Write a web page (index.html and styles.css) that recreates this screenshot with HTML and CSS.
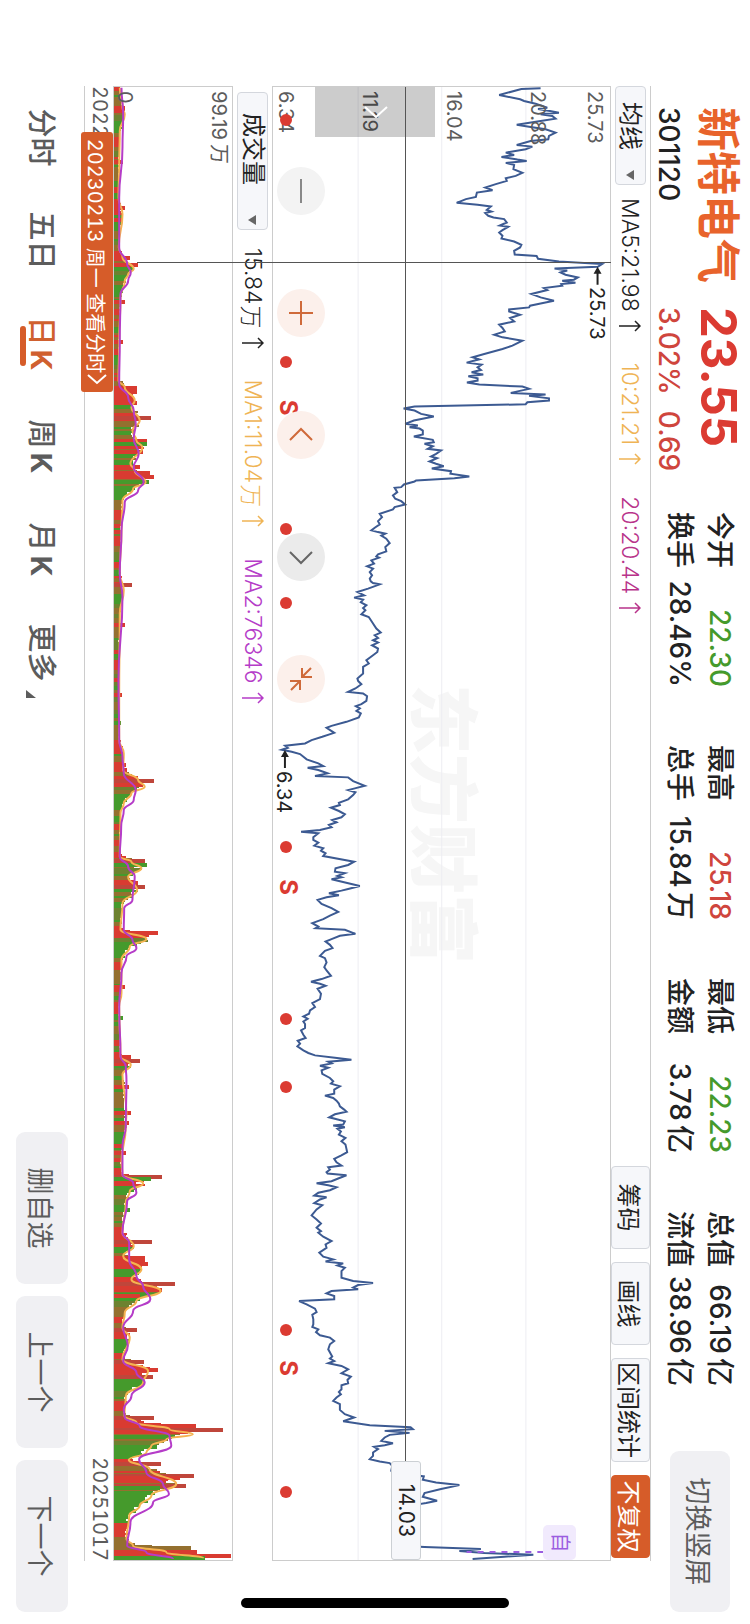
FILE: index.html
```html
<!DOCTYPE html>
<html lang="zh-CN">
<head>
  <meta charset="UTF-8" />
  <meta name="viewport" content="width=device-width, initial-scale=1.0"/>
  <title>新特电气 301120</title>
  <link rel="stylesheet" href="styles.css">
</head>
<body>
  <svg width="0" height="0" class="defs">
    <symbol id="up" viewBox="0 0 12 22"><path stroke-width="1.5" d="M6 22V1M1 6l5-5 5 5"/></symbol>
  </svg>
  <div class="screen">
    <header class="header">
      <div class="quote">
        <h1 class="name">新特电气</h1>
        <strong class="price">23.55</strong>
        <span class="code">301120</span>
        <span class="change"><span>3.02%</span><span>0.69</span></span>
      </div>
      <dl class="stats">
        <div><dt>今开</dt><dd class="down">22.30</dd></div>
        <div><dt>最高</dt><dd class="up">25.18</dd></div>
        <div><dt>最低</dt><dd class="down">22.23</dd></div>
        <div><dt>总值</dt><dd>66.19<span class="unit">亿</span></dd></div>
        <div><dt>换手</dt><dd>28.46%</dd></div>
        <div><dt>总手</dt><dd>15.84<span class="unit">万</span></dd></div>
        <div><dt>金额</dt><dd>3.78<span class="unit">亿</span></dd></div>
        <div><dt>流值</dt><dd>38.96<span class="unit">亿</span></dd></div>
      </dl>
      <button class="btn btn-rotate">切换竖屏</button>
    </header>

    <main class="main">
      <div class="bar">
        <span class="picker">
          <select aria-label="主图指标"><option>均线</option></select>
        </span>
        <span class="ma">MA5:21.98<svg class="arrow"><use href="#up"/></svg></span>
        <span class="ma ma-gold">10:21.21<svg class="arrow"><use href="#up"/></svg></span>
        <span class="ma ma-pink">20:20.44<svg class="arrow"><use href="#up"/></svg></span>
        <div class="tools">
          <button class="tool">筹码</button>
          <button class="tool">画线</button>
          <button class="tool">区间统计</button>
          <button class="tool tool-active">不复权</button>
        </div>
      </div>

      <div class="charts">
        <section class="price-chart">
          <div class="watermark">东方财富</div>
          <svg class="plot" viewBox="0 0 1475 338" preserveAspectRatio="none">
            <path class="grid" d="M0 84.5H1475M0 169H1475M0 253H1475"/>
            <polyline class="price-line" id="priceLine"/>
            <path class="self-line" d="M1467 67V144"/>
            <path class="hint" d="M183 12.500H198M667 326.500H682"/>
            <path class="hint-head" d="M180 12.500l7-4v8zM664 326.500l7-4v8z"/>
          </svg>
          <ul class="scale">
            <li>25.73</li>
            <li>20.88</li>
            <li>16.04</li>
            <li>11.19</li>
            <li>6.34</li>
          </ul>
          <span class="note note-high">25.73</span>
          <span class="note note-low">6.34</span>
          <div id="events"></div>
          <button class="handle" aria-label="展开">
            <svg width="12" height="24" viewBox="0 0 12 24"><path d="M1 1l10 11L1 23"/></svg>
          </button>
          <div class="round-btns">
            <button class="round round-off" aria-label="缩小">
              <svg viewBox="0 0 24 24"><path d="M0 12h24"/></svg>
            </button>
            <button class="round" aria-label="放大">
              <svg viewBox="0 0 24 24"><path d="M12 0v24M0 12h24"/></svg>
            </button>
            <button class="round" aria-label="左移">
              <svg viewBox="0 0 24 24"><path d="M17 1L6 12l11 11"/></svg>
            </button>
            <button class="round round-gray" aria-label="右移">
              <svg viewBox="0 0 24 24"><path d="M7 1l11 11L7 23"/></svg>
            </button>
            <button class="round" aria-label="收起">
              <svg viewBox="0 0 24 24"><path d="M1 11h9V1M10 11L1 2M14 23V13h9M14 13l9 9"/></svg>
            </button>
          </div>
          <span class="cross-x"></span>
          <span class="cross-label">14.03</span>
          <span class="self-tag">自</span>
        </section>

        <div class="bar bar-volume">
          <span class="picker picker-wide">
            <select aria-label="副图指标"><option>成交量</option></select>
          </span>
          <span class="ma">15.84<span class="unit">万</span><svg class="arrow"><use href="#up"/></svg></span>
          <span class="ma ma-gold">MA1:11.04<span class="unit">万</span><svg class="arrow"><use href="#up"/></svg></span>
          <span class="ma ma-purple">MA2:76346<svg class="arrow"><use href="#up"/></svg></span>
        </div>

        <section class="volume-chart">
          <svg class="plot" viewBox="0 0 1475 119" preserveAspectRatio="none">
            <g id="bars" shape-rendering="crispEdges"></g>
            <path class="vol-ma1" id="volMa1"/>
            <path class="vol-ma2" id="volMa2"/>
          </svg>
          <span class="vol-max">99.19<span class="unit">万</span></span>
          <span class="vol-min">0</span>
        </section>
        <span class="cross-y"></span>
      </div>

      <div class="dates">
        <span>20220805</span>
        <span>20251017</span>
        <button class="date-tip">20230213 周一 查看分时<svg width="12" height="20" viewBox="0 0 12 20"><path d="M2 1l8 9-8 9"/></svg></button>
      </div>
    </main>

    <footer class="footer">
      <nav class="tabs">
        <a href="#">分时</a>
        <a href="#">五日</a>
        <a href="#" class="active">日<b class="unit">K</b></a>
        <a href="#">周<b class="unit">K</b></a>
        <a href="#">月<b class="unit">K</b></a>
        <a href="#" class="more">更多</a>
      </nav>
      <button class="btn">删自选</button>
      <button class="btn">上一个</button>
      <button class="btn">下一个</button>
    </footer>
    <div class="home-bar"></div>
  </div>

  <script src="chart.js"></script>
</body>
</html>
```
FILE: styles.css
```css
* { box-sizing: border-box; }
html, body { height: 100%; margin: 0; overflow: hidden; }
body {
  background: #fff;
  color: #222;
  font-family: Inter, "Noto Sans CJK SC", sans-serif;
}
button, select { font-family: inherit; margin: 0; }
button { padding: 0; border: none; cursor: pointer; }
h1, ul, dl, dd { margin: 0; padding: 0; }
.defs { position: absolute; }
.unit { margin-left: 4px; }

/* landscape page on a portrait device */
.screen {
  position: relative;
  display: flex;
  flex-direction: column;
  width: 100vh;
  height: 100vw;
  transform-origin: 0 0;
  transform: translateX(100vw) rotate(90deg);
}

.header {
  display: flex;
  align-items: flex-start;
  height: 99px;
  padding: 0 12px 0 107px;
}
.quote {
  display: grid;
  grid-template-columns: 200px 205px;
  grid-template-rows: 64px 34px;
  align-items: center;
}
.name { font-size: 44px; line-height: 64px; font-weight: 700; color: #e8632b; }
.price { font-size: 49px; line-height: 62px; font-weight: 700; color: #db3b32; }
.code { font-size: 28px; line-height: 34px; font-weight: 500; }
.change {
  display: flex;
  gap: 16px;
  font-size: 28px;
  line-height: 34px;
  font-weight: 500;
  color: #cf453d;
}
.stats {
  display: grid;
  grid-template-columns: repeat(4, 175px);
  column-gap: 58px;
  padding-top: 10px;
  font-size: 28px;
  line-height: 40px;
  font-weight: 500;
}
.stats div { display: flex; justify-content: space-between; white-space: nowrap; }
.up { color: #cf453d; }
.down { color: #459a2c; }
.btn {
  width: 152px;
  height: 52px;
  border-radius: 9px;
  background: #f0f0f3;
  color: #5c5c5c;
  font-size: 27px;
}
.btn-rotate { width: 161px; height: 60px; margin: 20px 0 0 auto; }

.main {
  flex: 1;
  display: flex;
  flex-direction: column;
  min-height: 0;
  margin: 0 63px 0 86px;
  border-top: 1px solid #ccc;
}
.bar {
  display: flex;
  align-items: center;
  flex: none;
  height: 39px;
  gap: 31px;
}
.picker {
  position: relative;
  height: 31px;
  margin-right: -18px;
}
.picker select {
  appearance: none;
  width: 99px;
  height: 31px;
  padding: 0 15px;
  border: 1px solid #d4d7dd;
  border-radius: 4px;
  background: #f6f7fa;
  color: #222;
  font-size: 24px;
  line-height: 28px;
}
.picker::after {
  content: "";
  position: absolute;
  right: 5px;
  top: 12px;
  border: 5px solid transparent;
  border-top: 8px solid #666;
  border-bottom: 0;
}
.picker-wide { margin-left: 6px; margin-right: -13px; }
.picker-wide select { width: 138px; padding: 0 20px; }
.ma {
  display: flex;
  align-items: center;
  font-size: 23px;
  font-weight: 300;
  white-space: nowrap;
}
.ma .unit { margin-left: 1px; }
.arrow {
  width: 12px;
  height: 22px;
  margin-left: 8px;
  fill: none;
  stroke: currentColor;
}
.ma-gold { color: #efb455; }
.ma-pink { color: #b8338a; }
.ma-purple { color: #b53cc8; }
.tools { display: flex; gap: 13px; margin-left: auto; margin-right: 3px; }
.tool {
  min-width: 83px;
  height: 39px;
  padding: 0 3px;
  border: 1px solid #d4d7dd;
  border-radius: 4px;
  background: #f6f7fa;
  color: #222;
  font-size: 24px;
}
.tool-active { border-color: #d65c29; background: #d65c29; color: #fff; }

.charts {
  position: relative;
  flex: 1;
  display: flex;
  flex-direction: column;
  min-height: 0;
}
.price-chart {
  position: relative;
  flex: 338 0 0;
  min-height: 0;
  border: 1px solid #ccc;
}
.volume-chart {
  position: relative;
  flex: 119 0 0;
  min-height: 0;
  border: 1px solid #ccc;
}
.plot { position: absolute; inset: 0; width: 100%; height: 100%; }
.plot path, .plot polyline { fill: none; stroke-linejoin: round; }
.plot .grid { stroke: #ededf2; stroke-width: 1; }
.plot .price-line { stroke: #3c5a92; stroke-width: 2; stroke-linejoin: miter; }
.plot .self-line { stroke: #9b5de0; stroke-width: 2; stroke-dasharray: 6 6; }
.plot .hint { stroke: #222; stroke-width: 2; }
.plot .hint-head { fill: #222; }
.plot .vol-ma1 { stroke: #f5b350; stroke-width: 2; }
.plot .vol-ma2 { stroke: #b53cc8; stroke-width: 2; }

.watermark {
  position: absolute;
  left: 597px;
  top: 132px;
  font-size: 70px;
  line-height: 72px;
  font-weight: 900;
  color: #f6f6f6;
}
.scale {
  position: absolute;
  inset: 0;
  display: grid;
  grid-template-rows: 8% 17% 25% 25% 25%;
  align-items: end;
  padding-left: 4px;
  list-style: none;
  font-size: 20px;
  line-height: 24px;
  color: #5c5c5c;
}
.note { position: absolute; font-size: 20px; line-height: 26px; }
.note-high { left: 200px; top: 0; }
.note-low { left: 684px; bottom: -2px; }
.dot, .split {
  position: absolute;
  transform: translateX(-50%);
  color: #db3b32;
}
.dot { bottom: 7px; width: 12px; height: 12px; border-radius: 50%; background: #db3b32; }
.split { bottom: 0; font-size: 24px; line-height: 30px; font-weight: 700; }
.handle {
  position: absolute;
  left: 0;
  top: 175px;
  width: 50px;
  height: 120px;
  background: rgba(0, 0, 0, 0.2);
}
.handle svg, .date-tip svg { fill: none; stroke: #fff; stroke-width: 2; }
.round-btns {
  position: absolute;
  left: 80px;
  bottom: 4px;
  display: flex;
  gap: 74px;
}
.round {
  display: flex;
  align-items: center;
  justify-content: center;
  width: 48px;
  height: 48px;
  border-radius: 50%;
  background: #fcf0eb;
  color: #cf6a3a;
}
.round svg { width: 24px; height: 24px; fill: none; stroke: currentColor; stroke-width: 2; overflow: visible; }
.round-off { background: #f3f3f3; color: #888; }
.round-gray { background: #ebebeb; color: #666; }
.cross-x {
  position: absolute;
  left: 0;
  right: 0;
  top: 204px;
  height: 1px;
  background: #555;
}
.cross-y {
  position: absolute;
  left: 176px;
  top: 0;
  bottom: 24px;
  width: 1px;
  background: #555;
}
.cross-label {
  position: absolute;
  right: 0;
  top: 189px;
  width: 99px;
  height: 30px;
  border: 1px solid #ccd0d4;
  border-radius: 3px;
  background: #f6f7fa;
  font-size: 21px;
  line-height: 28px;
  text-align: center;
}
.self-tag {
  position: absolute;
  right: 0;
  top: 34px;
  width: 35px;
  height: 33px;
  border-radius: 5px;
  background: #f1eafd;
  color: #9b5de0;
  font-size: 20px;
  line-height: 32px;
  text-align: center;
}
.vol-max, .vol-min {
  position: absolute;
  left: 4px;
  font-size: 20px;
  line-height: 26px;
  color: #5c5c5c;
}
.vol-max { top: 0; }
.vol-min { bottom: -2px; }

.dates {
  position: relative;
  display: flex;
  justify-content: space-between;
  flex: none;
  height: 29px;
  border-bottom: 1px solid #ccc;
  font-size: 20px;
  line-height: 26px;
  font-variant-numeric: tabular-nums;
  color: #5c5c5c;
}
.date-tip {
  position: absolute;
  left: 46px;
  top: 0;
  display: flex;
  align-items: center;
  justify-content: center;
  width: 260px;
  height: 32px;
  border-radius: 3px;
  background: #d65c29;
  color: #fff;
  font-size: 20px;
  font-variant-numeric: tabular-nums;
  white-space: nowrap;
}

.footer {
  display: flex;
  align-items: center;
  flex: none;
  gap: 12px;
  height: 84px;
  padding: 0 12px 0 86px;
}
.tabs { display: flex; margin-right: auto; }
.tabs a {
  position: relative;
  width: 103px;
  padding-top: 2px;
  text-align: center;
  font-size: 29px;
  line-height: 50px;
  font-weight: 500;
  color: #5c5c5c;
  text-decoration: none;
}
.tabs .active { color: #d0602f; }
.tabs .active::after {
  content: "";
  position: absolute;
  left: 34px;
  bottom: 4px;
  width: 40px;
  height: 6px;
  border-radius: 3px;
  background: #d65c29;
}
.tabs .more::after {
  content: "";
  position: absolute;
  right: 6px;
  bottom: 10px;
  border-left: 8px solid transparent;
  border-bottom: 10px solid #5c5c5c;
}

.home-bar {
  position: absolute;
  right: 16px;
  top: 241px;
  bottom: 241px;
  width: 10px;
  border-radius: 5px;
  background: #000;
}
```
FILE: chart.js
```js
// each block: [start x, "step,level ..."], steps and levels in thirds of a unit
const price = [
  [-6, "22,870 24,812 42,745 55,808 60,820 68,855 80,890 84,862 90,898 95,925 100,870 105,905 113,915 120,870 131,798 138,840 145,885 155,915 165,895 175,893 180,840 192,798 197,845 205,825 215,765 222,790 228,752 236,800 240,828 246,765 252,790 265,788 276,815 285,795 292,765 300,768 310,735 320,703 328,725 335,678 348,675 355,645 366,617 372,680 377,720 387,708 392,722 397,703 405,712 410,728 415,760 425,768 434,747 438,772 448,755 455,745 465,755 473,752 482,790 492,812 500,808 510,790 521,792 526,858 534,862 542,925 550,1055 558,1042 563,912 569,950 575,930 582,945 590,982 597,970 600,935 606,975 610,932 615,935 622,880 628,890 640,842 650,870 660,910 668,870 675,838 680,835 686,775 692,775 702,808 712,778 722,790 732,745 742,755 752,762 762,730 770,755 780,815 795,785 805,755 820,700 830,665 836,685 846,647 852,692 860,680 868,690 875,662 882,697 887,652 893,680 900,680 906,648 912,685 918,815 925,835 937,780 942,885 946,835 953,895 960,895 965,830 971,825 978,490 984,457 990,490 1000,510 1008,548 1020,488 1030,462 1035,500 1040,475 1044,505 1050,515 1062,515 1068,488 1078,545 1085,548 1090,520 1097,545 1105,530 1110,570 1120,555 1128,540 1133,558 1143,535 1150,555 1157,578 1164,542 1172,600 1180,598 1188,655 1193,610 1200,495"],
  [394, "3,490 12,458 20,450 22,430 35,438 45,425 55,432 62,450 72,462 80,430 87,425 100,385 110,392 122,380 132,385 142,370 150,360 155,380 160,402 166,390 175,405 188,415 200,402 213,405 222,380 228,375 232,383 240,360 250,368 258,347 265,365 275,355 285,362 295,355 303,358 308,365 312,385 325,350 335,318 345,338 352,308 358,335 366,328 375,345 383,335 390,342 402,330 410,352 425,362 445,375 457,388 465,370 473,380 480,365 487,380 495,362 505,380 515,378 525,365 540,345 550,352 560,335 580,335 595,318 602,320 612,330 625,312 635,290 640,335 648,347 662,345 672,330 678,313 685,325 692,315 700,328 712,322 725,285 737,240 743,225 758,248 770,212 780,180 790,160 797,100 803,108 809,90 815,120 822,145 838,165 850,200 858,215 863,168 870,200 880,228 888,190 892,290 903,305 917,340 925,310 930,290 937,312 945,305 958,290 968,262 975,265 983,238 993,262 1003,280 1012,270 1020,242 1027,255 1035,232 1042,240 1050,205 1055,148 1060,200 1072,185 1080,185 1088,200 1097,188 1105,215 1112,208 1120,222 1128,215 1145,308 1155,290 1165,252 1175,250 1180,280 1188,258 1192,270 1198,240 1218,325 1227,290"],
  [794, "32,270 40,232 46,262 52,225 60,198 72,210 85,240 96,260 107,235 118,215 130,182 140,200 145,192 150,280 162,312 168,265 178,240 185,222 195,235 205,243 213,220 228,205 235,220 248,225 262,218 272,225 288,238 298,210 306,178 312,205 318,222 327,198 342,208 358,205 370,182 382,190 392,175 402,172 410,155 417,168 425,155 433,160 445,160 452,148 465,155 475,162 483,138 492,145 500,137 512,155 520,170 527,190 534,250 540,300 546,230 551,240 558,205 564,230 572,210 583,212 595,235 605,245 612,238 620,265 630,248 642,248 648,220 655,245 663,255 672,262 680,265 690,278 696,285 704,250 713,233 725,280 735,275 738,245 743,280 748,258 756,268 765,262 775,282 785,270 795,282 808,285 818,287 828,268 838,248 848,255 858,270 863,230 870,235 878,225 882,228 887,285 897,260 905,240 911,195 917,230 923,255 932,235 940,200 948,188 953,225 960,205 971,188 977,212 990,195 1008,180 1020,195 1032,208 1045,195 1055,208 1060,200 1072,215"],
  [1154, "5,240 15,222 25,225 40,203 52,215 60,245 66,222 72,275 78,258 85,280 95,270 115,270 125,305 131,365 137,320 145,305 150,320 155,240 162,225 170,248 180,248 185,142 195,165 208,190 218,195 226,182 240,185 255,185 263,182 270,200 278,193 288,205 295,235 305,248 315,235 330,230 345,238 352,242 358,235 365,248 372,230 380,270 390,290 402,270 412,298 422,288 432,290 438,270 450,270 458,262 465,268 475,255 485,245 495,265 512,265 525,280 535,308 546,275 552,315 558,355 564,478 570,485 575,400 581,475 587,415 595,400 605,390 612,425 618,400 623,368 630,380 640,365 650,365 660,355 667,385 672,415 680,423 695,420 705,470 712,518 722,515 730,555 738,625 750,570 762,520 773,515 785,558 792,525 796,500 830,450 860,440 900,430 922,480 924,520 930,690 936,625 942,700 947,848 953,760 960,665"]
];
const ma1 = [
  [-6, "20,360 80,368 100,375 150,360 250,358 350,356 400,368 500,357 530,368 565,402 580,385 600,375 650,362 780,358 900,356 920,375 960,405 980,395 1020,420 1050,398 1080,410 1100,428 1150,392 1170,405"],
  [394, "5,438 25,400 60,368 150,365 280,360 330,372 400,360 640,358 780,358 820,372 870,370 900,415 920,435 940,395 970,372 1000,362 1130,360 1145,395 1165,425 1190,385"],
  [794, "30,412 70,368 150,362 178,440 200,390 240,365 340,365 380,358 530,362 555,393 585,368 700,380 740,378 850,365 885,368 912,430 935,390 970,378 1060,368"],
  [1154, "20,402 50,370 90,425 120,395 155,483 185,410 220,375 265,368 295,390 360,368 395,445 430,430 470,378 530,374 550,410 570,510 585,580 600,500 620,455 640,440 662,387 690,450 735,530 770,455 800,420 830,388 900,380 920,400 940,500 958,612"]
];
const ma2 = [
  [-6, "20,365 100,370 200,368 350,358 500,358 550,382 575,393 600,385 640,362 780,360 910,358 950,385 990,402 1030,408 1075,402 1120,417 1160,402"],
  [394, "5,432 30,415 65,375 150,365 280,360 350,368 600,356 780,358 830,368 880,372 930,408 960,402 990,372 1040,364 1130,360 1160,385 1190,405"],
  [794, "60,398 85,373 150,372 180,398 205,410 230,380 280,365 380,358 530,362 560,378 600,380 740,378 800,368 885,368 910,400 940,410 965,382 1060,368"],
  [1154, "10,388 60,388 110,410 140,430 180,452 215,400 265,370 320,384 365,370 400,410 430,435 470,395 510,372 535,375 560,420 590,510 620,515 660,418 700,440 735,490 765,508 790,460 850,392 920,382 940,440 960,520"]
];

function unpack(blocks, zero) {
  const out = [];
  blocks.forEach(([start, text]) => {
    text.split(" ").forEach(pair => {
      const [step, level] = pair.split(",").map(Number);
      out.push([start + step / 3, (level - zero) / 3]);
    });
  });
  return out;
}

function drawLine(id, list, height) {
  document.getElementById(id).setAttribute("points",
    list.map(([x, v]) => x.toFixed(1) + "," + (height - v).toFixed(1)).join(" "));
}

function drawCurve(id, list, height) {
  let d = `M${list[0][0].toFixed(1)} ${(height - list[0][1]).toFixed(1)}`;
  for (let i = 1; i < list.length; i++) {
    const mid = ((list[i - 1][0] + list[i][0]) / 2).toFixed(1);
    const y0 = (height - list[i - 1][1]).toFixed(1);
    const y1 = (height - list[i][1]).toFixed(1);
    d += `C${mid} ${y0} ${mid} ${y1} ${list[i][0].toFixed(1)} ${y1}`;
  }
  document.getElementById(id).setAttribute("d", d);
}

const avg = unpack(ma1, 341);
drawLine("priceLine", unpack(price, 65), 338);
drawCurve("volMa1", avg, 119);
drawCurve("volMa2", unpack(ma2, 341), 119);

// volume peaks: x, height, colour (r up, g down, b/o/d mixed)
const peaks = "21,12,r 75,10,r 121,12,r 133,10,r 171,17,r 178,25,r 182,20,g 215,12,r 255,10,r 301,24,r 305,24,r 316,24,r 331,38,d 354,34,r 357,34,g 365,30,r 381,27,r 387,37,r 391,41,r 396,36,g 446,9,r 499,19,d 539,12,r 609,9,r 637,8,g 679,13,r 695,41,d 699,30,r 775,32,d 779,34,g 797,25,r 801,32,d 847,45,r 849,36,r 901,12,r 932,10,g 971,18,r 975,27,d 1001,16,r 1027,18,r 1037,16,r 1067,13,r 1091,49,d 1093,38,g 1125,17,g 1157,39,d 1173,32,r 1175,32,r 1179,35,r 1186,27,g 1199,62,d 1205,49,r 1211,27,r 1245,24,d 1277,31,d 1285,45,r 1292,40,d 1333,41,d 1341,83,r 1345,110,d 1347,75,r 1352,56,g 1362,44,g 1379,48,d 1391,81,d 1393,67,r 1401,73,d 1403,47,g 1463,78,b 1467,84,r 1471,118,r 1473,92,g";
const colors = { r: "#d93b31", g: "#459a2c", b: "#94702f", o: "#6d8230", d: "#bf463b" };

function level(x) {
  for (let i = 1; i < avg.length; i++) {
    if (x <= avg[i][0]) {
      const [x0, v0] = avg[i - 1];
      const [x1, v1] = avg[i];
      return v0 + (v1 - v0) * Math.max(0, x - x0) / (x1 - x0);
    }
  }
  return avg[avg.length - 1][1];
}

function bar(x, w, h, c) {
  return `<rect x="${x}" y="${(119 - h).toFixed(1)}" width="${w}" height="${h.toFixed(1)}" fill="${colors[c]}"/>`;
}

let seed = 11;
function rnd() {
  seed = (seed * 16807) % 2147483647;
  return seed / 2147483647;
}

let bars = "";
let run = 0;
let tone = "r";
for (let x = 0; x < 1474; x += 2) {
  if (run-- <= 0) {
    const rising = level(x + 8) - level(x - 4);
    const r = rnd();
    if (rising > 2) tone = r < 0.7 ? "r" : "b";
    else if (rising < -2) tone = r < 0.5 ? "g" : r < 0.8 ? "b" : "o";
    else tone = "rrggbbbo"[Math.floor(r * 8)];
    run = Math.floor(rnd() * 3);
  }
  bars += bar(x, 2, Math.max(level(x), level(x + 4)) * (0.8 + rnd() * 0.3), tone);
}
peaks.split(" ").forEach(p => {
  const [x, h, c] = p.split(",");
  bars += bar(Math.min(x - 2, 1471), 4, Number(h), c);
});
document.getElementById("bars").innerHTML = bars;

// dividend dots and split marks
const events = [[33, ""], [275, ""], [321, "S"], [443, ""], [517, ""], [761, ""], [801, "S"], [933, ""], [1001, ""], [1245, ""], [1283, "S"], [1407, ""]];
document.getElementById("events").innerHTML = events.map(([x, t]) =>
  `<span class="${t ? "split" : "dot"}" style="left:${(x / 14.75).toFixed(2)}%">${t}</span>`).join("");
```
